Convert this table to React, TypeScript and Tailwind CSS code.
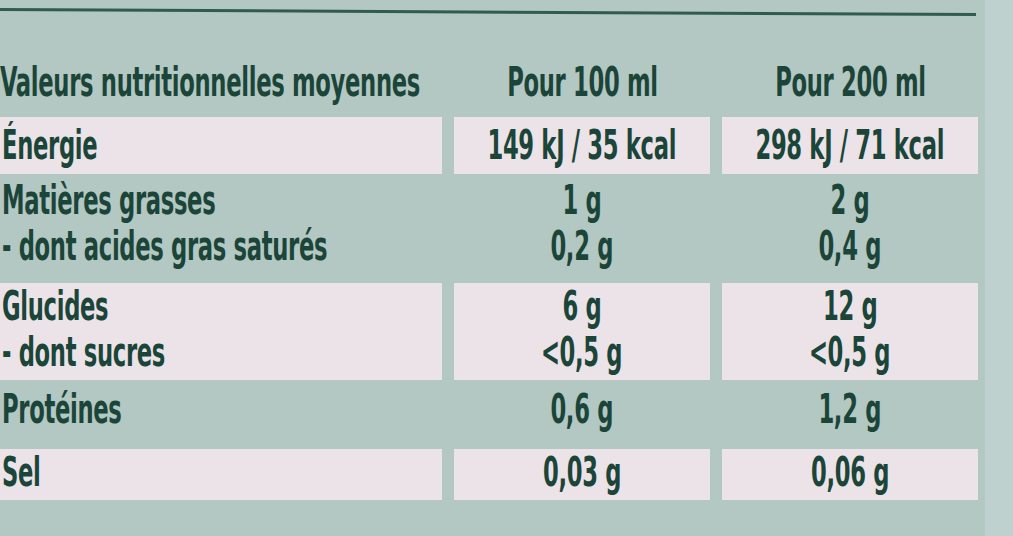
import React from "react";

const font = {
  fontFamily: '"DejaVu Sans Condensed", "DejaVu Sans", "Liberation Sans", sans-serif',
};

function T({ children, align }: { children: React.ReactNode; align: "left" | "center" }) {
  return (
    <div className={align === "left" ? "h-[46px] flex items-center justify-start" : "h-[46px] flex items-center justify-center"}>
      <span
        className={
          align === "left"
            ? "inline-block whitespace-nowrap text-[40px] leading-[46px] font-bold text-[#1b4538] [font-stretch:condensed] scale-x-[0.63] origin-left tracking-[-0.5px]"
            : "inline-block whitespace-nowrap text-[40px] leading-[46px] font-bold text-[#1b4538] [font-stretch:condensed] scale-x-[0.63] origin-center tracking-[-0.5px]"
        }
      >
        {children}
      </span>
    </div>
  );
}

type Row = { c: string[][]; h: string; pt: string; boxed: boolean };

const rows: Row[] = [
  { c: [["Énergie"], ["149 kJ / 35 kcal"], ["298 kJ / 71 kcal"]], h: "h-[57px]", pt: "pt-[5px]", boxed: true },
  {
    c: [["Matières grasses", "- dont acides gras saturés"], ["1 g", "0,2 g"], ["2 g", "0,4 g"]],
    h: "h-[109px]",
    pt: "pt-[3px]",
    boxed: false,
  },
  {
    c: [["Glucides", "- dont sucres"], ["6 g", "<0,5 g"], ["12 g", "<0,5 g"]],
    h: "h-[97px]",
    pt: "pt-[0px]",
    boxed: true,
  },
  { c: [["Protéines"], ["0,6 g"], ["1,2 g"]], h: "h-[69px]", pt: "pt-[6px]", boxed: false },
  { c: [["Sel"], ["0,03 g"], ["0,06 g"]], h: "h-[51px]", pt: "pt-[0px]", boxed: true },
];

export default function App() {
  return (
    <div className="w-[1013px] h-[536px] overflow-hidden bg-[#b3c7c3] flex" style={font}>
      <div className="w-[985px] flex flex-col">
        <div className="mt-[8px] h-[3px] w-[976px] bg-[#2e5d50] rotate-[0.3deg] origin-left" />
        <div className="mt-[45px] h-[52px] grid grid-cols-[442px_256px_256px] gap-x-[12px] items-center">
          <T align="left">Valeurs nutritionnelles moyennes</T>
          <T align="center">Pour 100 ml</T>
          <T align="center">Pour 200 ml</T>
        </div>
        <div className="h-[9px]" />
        {rows.map((r, i) => (
          <div key={i} className={`${r.h} grid grid-cols-[442px_256px_256px] gap-x-[12px]`}>
            {r.c.map((cell, j) => (
              <div
                key={j}
                className={`${r.boxed ? "bg-[#ebe3e8]" : ""} ${r.pt} ${j === 0 ? "pl-[2px]" : ""} flex flex-col`}
              >
                {cell.map((t, k) => (
                  <T key={k} align={j === 0 ? "left" : "center"}>
                    {t}
                  </T>
                ))}
              </div>
            ))}
          </div>
        ))}
      </div>
      <div className="flex-1 bg-[#bfd1ce]" />
    </div>
  );
}
